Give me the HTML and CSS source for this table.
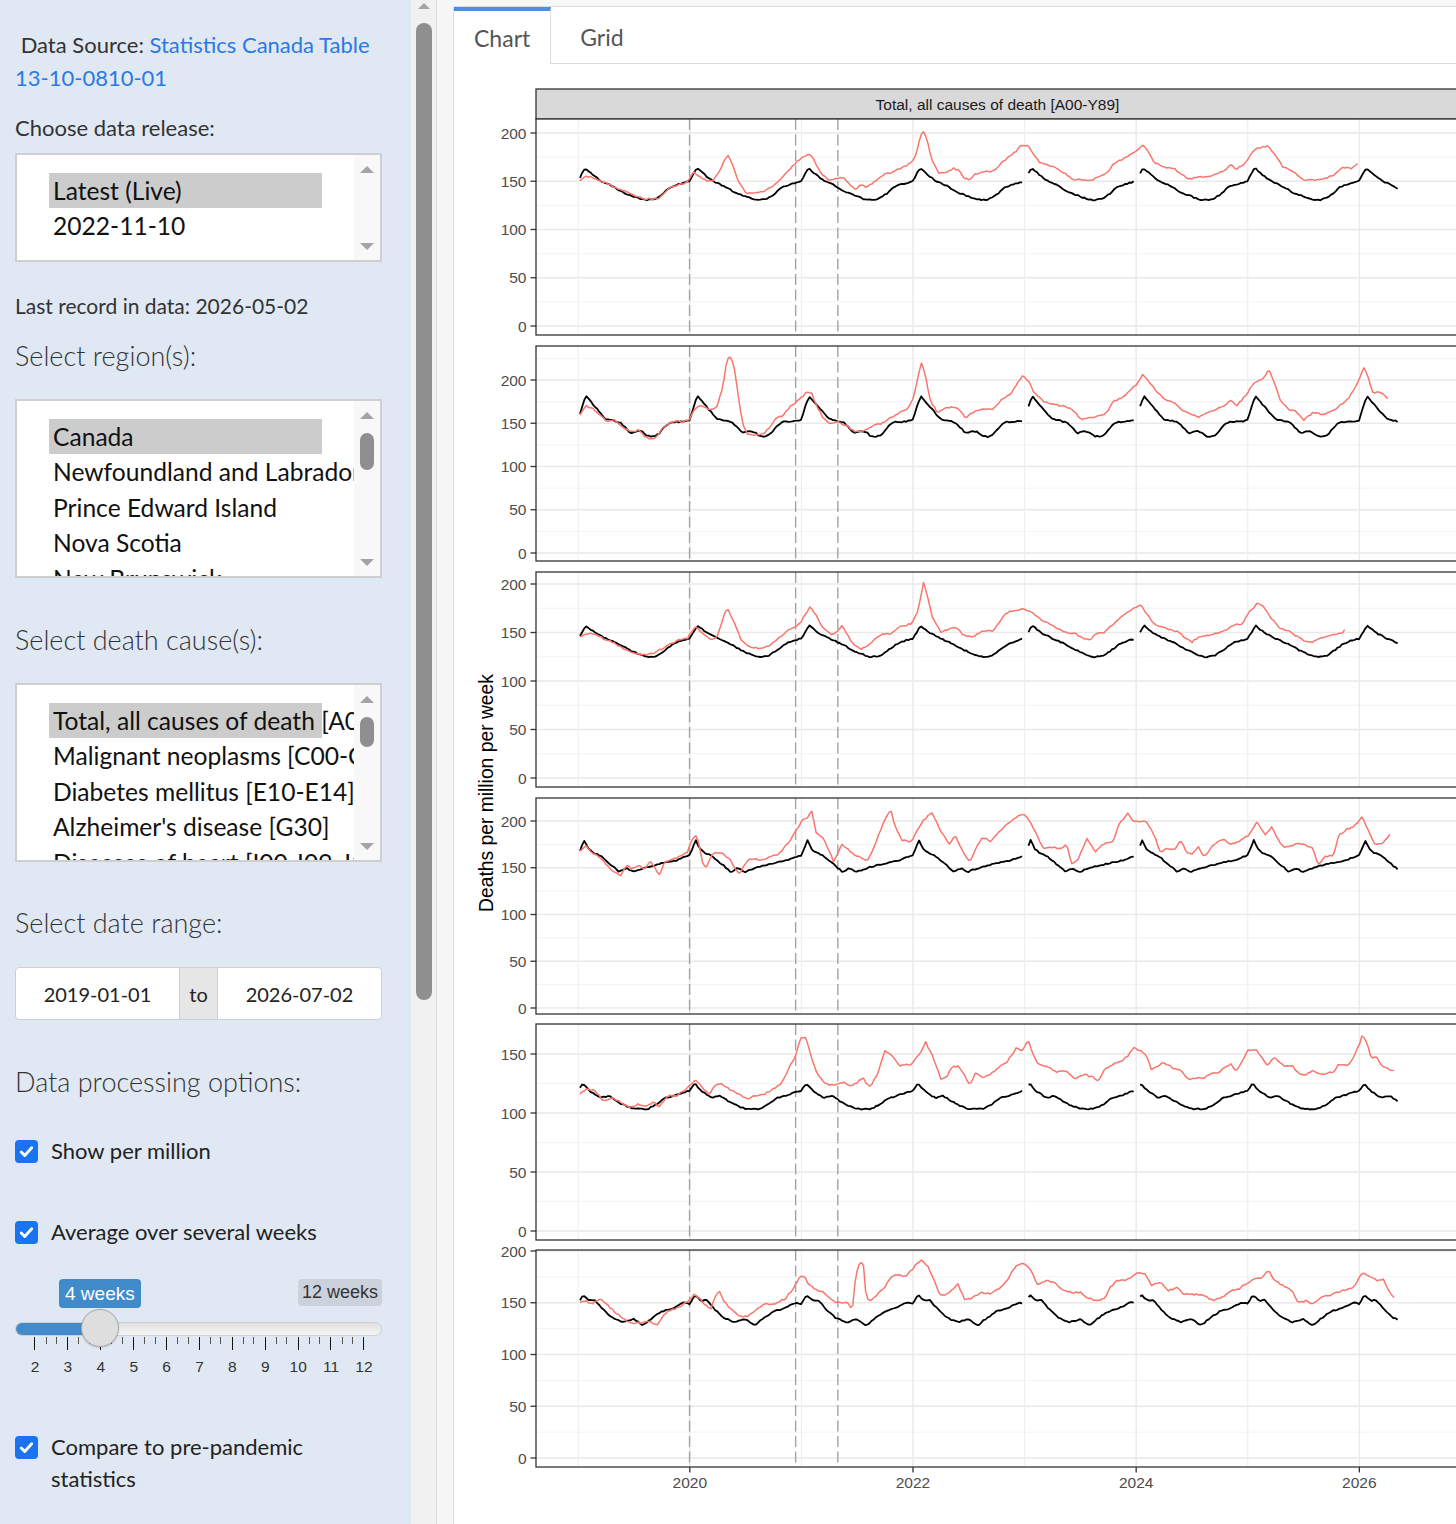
FILE: index.html
```html
<!DOCTYPE html>
<html lang="en">
<head>
<meta charset="utf-8">
<title>Canadian weekly deaths</title>
<link rel="stylesheet" href="styles.css">
</head>
<body>
<div class="app">
  <aside class="sidebar">
    <p class="source">&nbsp;Data Source: <a class="src-link" href="#">Statistics Canada Table 13-10-0810-01</a></p>

    <div class="lbl lbl-release">Choose data release:</div>
    <div class="listbox lb-release">
      <div class="lb-opts">
        <div class="lb-opt selected">Latest (Live)</div>
        <div class="lb-opt">2022-11-10</div>
      </div>
      <div class="lb-bar"><span class="arr-up"></span><span class="lb-fill"></span><span class="arr-down"></span></div>
    </div>

    <div class="lbl last-record">Last record in data: 2026-05-02</div>

    <h3 class="section sec-region">Select region(s):</h3>
    <div class="listbox lb-tall">
      <div class="lb-opts">
        <div class="lb-opt selected">Canada</div>
        <div class="lb-opt">Newfoundland and Labrador</div>
        <div class="lb-opt">Prince Edward Island</div>
        <div class="lb-opt">Nova Scotia</div>
        <div class="lb-opt">New Brunswick</div>
        <div class="lb-opt">Quebec</div>
      </div>
      <div class="lb-bar"><span class="arr-up"></span><span class="lb-thumb thumb-region"></span><span class="lb-fill"></span><span class="arr-down"></span></div>
    </div>

    <h3 class="section sec-cause">Select death cause(s):</h3>
    <div class="listbox lb-tall">
      <div class="lb-opts">
        <div class="lb-opt selected">Total, all causes of death [A00-Y89]</div>
        <div class="lb-opt">Malignant neoplasms [C00-C97]</div>
        <div class="lb-opt">Diabetes mellitus [E10-E14]</div>
        <div class="lb-opt">Alzheimer's disease [G30]</div>
        <div class="lb-opt">Diseases of heart [I00-I09, I11, I13, I20-I51]</div>
        <div class="lb-opt">Cerebrovascular diseases [I60-I69]</div>
      </div>
      <div class="lb-bar"><span class="arr-up"></span><span class="lb-thumb thumb-cause"></span><span class="lb-fill"></span><span class="arr-down"></span></div>
    </div>

    <h3 class="section sec-date">Select date range:</h3>
    <div class="daterange">
      <div class="dr-input">2019-01-01</div>
      <div class="dr-to">to</div>
      <div class="dr-input">2026-07-02</div>
    </div>

    <h3 class="section sec-proc">Data processing options:</h3>

    <div class="check check-1">
      <span class="cb"><svg viewBox="0 0 16 16"><path d="M3.6 8.4l2.9 2.9 5.9-6.4"/></svg></span>
      <span class="check-text">Show per million</span>
    </div>

    <div class="check check-2">
      <span class="cb"><svg viewBox="0 0 16 16"><path d="M3.6 8.4l2.9 2.9 5.9-6.4"/></svg></span>
      <span class="check-text">Average over several weeks</span>
    </div>

    <div class="slider">
      <div class="sl-labels"><span class="sl-from">4 weeks</span><span class="sl-max">12 weeks</span></div>
      <div class="sl-track"><div class="sl-bar"></div><div class="sl-handle"></div></div>
      <div class="sl-grid">
        <span class="sl-cell"></span><span class="sl-cell"></span><span class="sl-cell"></span><span class="sl-cell"></span><span class="sl-cell"></span>
        <span class="sl-cell"></span><span class="sl-cell"></span><span class="sl-cell"></span><span class="sl-cell"></span><span class="sl-cell last"></span>
      </div>
      <div class="sl-nums">
        <span>2</span><span>3</span><span>4</span><span>5</span><span>6</span><span>7</span><span>8</span><span>9</span><span>10</span><span>11</span><span>12</span>
      </div>
    </div>

    <div class="check check-3">
      <span class="cb"><svg viewBox="0 0 16 16"><path d="M3.6 8.4l2.9 2.9 5.9-6.4"/></svg></span>
      <span class="check-text wrap">Compare to pre-pandemic statistics</span>
    </div>
  </aside>

  <div class="side-scroll">
    <span class="sc-up"></span>
    <span class="sc-thumb"></span>
  </div>

  <main class="main">
    <div class="card">
      <nav class="tabs">
        <span class="tab active">Chart</span>
        <span class="tab">Grid</span>
      </nav>
      <svg class="plot" id="plot" viewBox="455 64 1100 1460" width="1100" height="1460"></svg>
    </div>
  </main>
</div>
<script src="app.js"></script>
</body>
</html>
```

FILE: styles.css
```css
html, body {
  margin: 0;
  padding: 0;
  height: 100%;
  overflow: hidden;
}
body {
  font-family: Lato, "Noto Sans", sans-serif;
  color: #333;
  background: #fff;
}
.app {
  display: flex;
  height: 1524px;
}

/* ---------- sidebar ---------- */
.sidebar {
  width: 411px;
  flex: none;
  box-sizing: border-box;
  padding: 0 29px 0 15px;
  background: #e0e8f3;
  overflow: hidden;
}
.source {
  margin: 28px 0 0;
  font-size: 22px;
  line-height: 33px;
}
.src-link {
  color: #2a7ae2;
  text-decoration: none;
}
.lbl {
  font-size: 22px;
  line-height: 28px;
}
.lbl-release { margin-top: 20px; }
.last-record {
  margin-top: 30px;
  font-size: 21px;
}
.section {
  margin: 0;
  font-size: 27px;
  font-weight: 300;
  line-height: 36px;
  color: #333;
}
.sec-region { margin-top: 18px; }
.sec-cause { margin-top: 44px; }
.sec-date { margin-top: 43px; }
.sec-proc { margin-top: 44px; }

.listbox {
  display: flex;
  box-sizing: border-box;
  border: 2px solid #cfcfcf;
  background: #fff;
}
.lb-release {
  margin-top: 11px;
  height: 109px;
}
.lb-tall {
  margin-top: 25px;
  height: 179px;
}
.lb-opts {
  flex: 1;
  min-width: 0;
  overflow: hidden;
  padding: 18px 0 0 32px;
}
.lb-opt {
  width: 273px;
  box-sizing: border-box;
  height: 35.4px;
  line-height: 35.4px;
  padding-left: 4px;
  white-space: nowrap;
  font-size: 24.6px;
  color: #111;
}
.lb-opt.selected {
  background: #cccccc;
}
.lb-bar {
  width: 26px;
  flex: none;
  box-sizing: border-box;
  padding: 11px 0 10px;
  background: #f8f8f8;
  display: flex;
  flex-direction: column;
  align-items: center;
}
.arr-up, .arr-down {
  width: 0;
  height: 0;
  border-left: 7px solid transparent;
  border-right: 7px solid transparent;
}
.arr-up { border-bottom: 7px solid #a3a3a3; }
.arr-down { border-top: 7px solid #a3a3a3; }
.lb-fill { flex: 1; }
.lb-thumb {
  width: 14px;
  margin-top: 14px;
  border-radius: 7px;
  background: #8f8f8f;
}
.thumb-region { height: 37px; }
.thumb-cause { height: 30px; }

.daterange {
  margin-top: 26px;
  display: flex;
  height: 53px;
  box-sizing: border-box;
  border: 1.5px solid #cfcfcf;
  border-radius: 4px;
  background: #fff;
  font-size: 20px;
  color: #222;
}
.dr-input {
  flex: 1;
  display: flex;
  align-items: center;
  justify-content: center;
}
.dr-to {
  width: 39px;
  flex: none;
  box-sizing: border-box;
  background: #e6e6e6;
  border-left: 1.5px solid #cfcfcf;
  border-right: 1.5px solid #cfcfcf;
  display: flex;
  align-items: center;
  justify-content: center;
}

.check {
  display: flex;
  align-items: flex-start;
  gap: 13px;
  font-size: 22px;
  line-height: 28px;
  color: #222;
}
.check-1 { margin-top: 37px; }
.check-2 { margin-top: 53px; }
.check-3 {
  margin-top: 54px;
  line-height: 32px;
}
.cb {
  width: 23px;
  height: 23px;
  flex: none;
  margin-top: 2.5px;
  border-radius: 4px;
  background: #1a73f0;
  display: flex;
  align-items: center;
  justify-content: center;
}
.check-3 .cb { margin-top: 4.5px; }
.cb svg {
  width: 19px;
  height: 19px;
}
.cb path {
  fill: none;
  stroke: #fff;
  stroke-width: 2.4;
  stroke-linecap: round;
  stroke-linejoin: round;
}
.wrap { max-width: 300px; }

/* slider */
.slider {
  margin-top: 33px;
  font-family: "Liberation Sans", Arial, sans-serif;
}
.sl-labels {
  display: flex;
  justify-content: space-between;
  align-items: flex-start;
  height: 29px;
}
.sl-from {
  margin-left: 44px;
  height: 29px;
  line-height: 29px;
  padding: 0 6px;
  border-radius: 4px;
  background: #428bca;
  color: #fff;
  font-size: 19px;
}
.sl-max {
  height: 27px;
  line-height: 27px;
  padding: 0 4px;
  border-radius: 4px;
  background: #cbd2dc;
  color: #333;
  font-size: 18px;
}
.sl-track {
  position: relative;
  margin-top: 14px;
  height: 12px;
  border: 1px solid #cfcfcf;
  border-radius: 7px;
  background: linear-gradient(#e0e0e0, #f5f5f5);
}
.sl-bar {
  width: 85px;
  height: 100%;
  border-radius: 7px 0 0 7px;
  background: #428bca;
}
.sl-handle {
  position: absolute;
  left: 65px;
  top: -14px;
  width: 38px;
  height: 38px;
  box-sizing: border-box;
  border: 1.5px solid #a8a8a8;
  border-radius: 50%;
  background: #dedede;
  box-shadow: 0 1px 2px rgba(0,0,0,0.15);
}
.sl-grid {
  display: flex;
  width: 330px;
  height: 13px;
  margin: 1px 0 0 19.3px;
}
.sl-cell {
  flex: 1;
  border-left: 1.5px solid #111;
  background:
    linear-gradient(#555, #555) 33.3% 0 / 1px 7px no-repeat,
    linear-gradient(#555, #555) 66.7% 0 / 1px 7px no-repeat;
}
.sl-cell.last { border-right: 1.5px solid #111; }
.sl-nums {
  display: grid;
  grid-template-columns: repeat(11, 32.9px);
  margin: 7px 0 0 3.6px;
  font-size: 15.5px;
  line-height: 20px;
  text-align: center;
  color: #333;
}

/* ---------- sidebar scrollbar ---------- */
.side-scroll {
  width: 26px;
  flex: none;
  box-sizing: border-box;
  background: #f1f1f1;
  border-right: 1px solid #dedede;
  display: flex;
  flex-direction: column;
  align-items: center;
  padding-top: 3px;
}
.sc-up {
  width: 0;
  height: 0;
  border-left: 6px solid transparent;
  border-right: 6px solid transparent;
  border-bottom: 6px solid #a3a3a3;
}
.sc-thumb {
  width: 16px;
  height: 977px;
  margin-top: 14px;
  border-radius: 8px;
  background: #8f8f8f;
}

/* ---------- main ---------- */
.main {
  flex: 1;
  min-width: 0;
  box-sizing: border-box;
  padding: 6px 0 0 16px;
  background: #f7f7f7;
  overflow: hidden;
}
.card {
  height: 100%;
  background: #fff;
  border-left: 1px solid #dcdcdc;
  border-top: 1px solid #dcdcdc;
  overflow: hidden;
}
.tabs {
  display: flex;
  height: 56px;
  border-bottom: 1px solid #dcdcdc;
}
.tab {
  display: flex;
  align-items: center;
  box-sizing: border-box;
  padding: 0 20px;
  font-size: 23px;
  color: #555;
  border-left: 1px solid transparent;
  border-top: 4px solid transparent;
}
.tab.active {
  height: 57px;
  border-left: none;
  border-top-color: #4a8fe0;
  border-right: 1px solid #dcdcdc;
  margin-right: 8px;
  background: #fff;
  position: relative;
  z-index: 1;
}
.plot {
  display: block;
}
.plot text {
  font-family: "Liberation Sans", Arial, sans-serif;
}
.panel-bg { fill: #fff; }
.grid-major { stroke: #e9e9e9; stroke-width: 1.6; }
.grid-minor { stroke: #f2f2f2; stroke-width: 0.9; }
.vgrid-major { stroke: #ebebeb; stroke-width: 1.5; }
.vgrid-minor { stroke: #efefef; stroke-width: 1.2; }
.vline-dash { stroke: #a3a3a3; stroke-width: 1.4; stroke-dasharray: 11 4.5; }
.line-black { fill: none; stroke: #000; stroke-width: 1.8; stroke-linejoin: round; }
.line-red { fill: none; stroke: #f8766d; stroke-width: 1.5; stroke-linejoin: round; }
.panel-border { fill: none; stroke: #333; stroke-width: 1.3; }
.strip { fill: #d9d9d9; stroke: #333; stroke-width: 1.3; }
.strip-text { font-size: 15.5px; fill: #1a1a1a; text-anchor: middle; dominant-baseline: central; }
.tick-label { font-size: 15.5px; fill: #4d4d4d; dominant-baseline: central; }
.tick-y { text-anchor: end; }
.tick-x { text-anchor: middle; }
.axis-tick { stroke: #333; stroke-width: 1.3; }
.axis-title { font-size: 19.3px; fill: #000; text-anchor: middle; dominant-baseline: central; }
```

FILE: app.js
```js
(function () {
  var NS = 'http://www.w3.org/2000/svg';
  var svg = document.getElementById('plot');
  function add(tag, attrs, parent, text) {
    var e = document.createElementNS(NS, tag);
    for (var k in attrs) e.setAttribute(k, attrs[k]);
    if (text !== undefined) e.textContent = text;
    (parent || svg).appendChild(e);
    return e;
  }
  var LEFT = 537, RIGHT = 1460;
  function xz(zx) { return LEFT + zx / 1.7062; }
  function xt(t) { return xz(72 + 190.4 * t); }

  var MINOR_X = [0, 2, 4, 6].map(xt);
  var MAJOR_X = [1, 3, 5, 7].map(xt);
  var DASH_X = [xz(262), xz(443), xz(515)];

  var seed = 98765431;
  function rnd() { seed = (seed * 16807) % 2147483647; return seed / 2147483647; }

  function redPoints(kp, crop) {
    var pxs = kp.map(function (a) { return xz(a[0]); });
    var pys = kp.map(function (a) { return crop + a[1] / 3; });
    var pts = [], i = 0, step = 2.148, x = pxs[0], last = pxs[pxs.length - 1];
    while (x <= last + 0.01) {
      while (i < pxs.length - 2 && x > pxs[i + 1]) i++;
      var f = (x - pxs[i]) / (pxs[i + 1] - pxs[i]);
      var y = pys[i] + f * (pys[i + 1] - pys[i]) + (rnd() - 0.5) * 1.6;
      pts.push(x.toFixed(1) + ',' + y.toFixed(1));
      x += step;
    }
    return pts.join(' ');
  }

  function blackLines(pat, crop) {
    var segs = [], cur = [];
    for (var t = 0.016; t <= 7.345; t += 1 / 52) {
      var gap = (t > 3.982 && t < 4.023) || (t > 4.982 && t < 5.023);
      if (gap) { if (cur.length) { segs.push(cur); cur = []; } continue; }
      var u = t - Math.floor(t);
      var j = 0;
      while (j < pat.length - 2 && u > pat[j + 1][0]) j++;
      var f = (u - pat[j][0]) / (pat[j + 1][0] - pat[j][0]);
      var zy = pat[j][1] + f * (pat[j + 1][1] - pat[j][1]);
      var y = crop + zy / 3 + (rnd() - 0.5) * 1.2;
      cur.push(xt(t).toFixed(1) + ',' + y.toFixed(1));
    }
    if (cur.length) segs.push(cur);
    return segs.map(function (s) { return s.join(' '); });
  }

  var panels = [
    { top: 119, bot: 335, z: 326, k: 0.965, crop: 119,
      black: [[0,186],[0.03,165],[0.065,147],[0.1,158],[0.15,172],[0.2,185],[0.3,200],[0.4,220],[0.5,233],[0.58,242],[0.64,243],[0.7,238],[0.76,225],[0.82,205],[0.88,198],[0.94,192],[1,186]],
      red: [[75,185],[85,172],[95,175],[110,185],[130,200],[150,215],[170,232],[185,240],[200,240],[210,238],[225,210],[240,198],[255,192],[262,180],[270,158],[280,175],[290,185],[302,185],[312,160],[320,130],[327,108],[335,135],[345,185],[358,222],[375,222],[390,215],[405,200],[415,185],[430,155],[445,128],[458,112],[465,105],[472,115],[480,145],[490,170],[500,183],[510,180],[525,175],[535,195],[545,210],[555,198],[565,205],[580,185],[595,165],[610,158],[625,145],[640,132],[648,110],[655,60],[660,32],[667,60],[675,120],[688,165],[700,158],[712,148],[722,155],[730,175],[740,185],[750,165],[765,158],[780,158],[790,140],[805,115],[820,95],[828,78],[840,82],[850,110],[860,130],[875,140],[890,150],[905,165],[915,180],[930,183],[945,185],[960,175],[975,160],[985,135],[995,125],[1010,110],[1025,95],[1035,77],[1045,100],[1055,130],[1065,140],[1080,148],[1090,150],[1100,165],[1115,180],[1130,175],[1150,170],[1160,165],[1175,155],[1185,138],[1195,150],[1205,140],[1215,120],[1228,87],[1250,82],[1262,110],[1275,145],[1290,155],[1300,170],[1310,185],[1325,183],[1345,178],[1360,170],[1375,145],[1390,148],[1400,138],[1405,130]] },
    { top: 346, bot: 561, z: 553, k: 0.865, crop: 346,
      black: [[0,222],[0.035,182],[0.068,150],[0.12,170],[0.17,190],[0.25,220],[0.33,225],[0.38,230],[0.44,250],[0.47,262],[0.54,255],[0.58,258],[0.62,270],[0.67,272],[0.72,265],[0.78,240],[0.83,228],[0.88,228],[0.96,225],[1,222]],
      red: [[75,208],[85,180],[95,185],[105,200],[120,225],[135,222],[150,245],[165,258],[175,252],[185,270],[195,280],[205,272],[220,240],[235,225],[250,228],[262,220],[270,190],[278,178],[290,185],[300,192],[308,185],[318,130],[325,50],[330,28],[338,60],[345,150],[352,230],[360,262],[370,268],[390,262],[400,240],[410,215],[420,210],[435,180],[450,160],[462,138],[470,140],[480,185],[490,215],[500,230],[515,228],[530,240],[545,258],[560,255],[575,240],[590,232],[605,215],[620,200],[635,188],[645,150],[652,90],[658,50],[665,95],[672,160],[685,200],[700,185],[712,182],[722,190],[732,215],[745,200],[760,190],[780,188],[795,160],[810,145],[825,100],[830,90],[840,105],[850,140],[865,165],[880,175],[900,180],[915,190],[930,220],[945,215],[960,208],[975,200],[985,165],[995,160],[1010,140],[1025,115],[1035,85],[1045,105],[1060,140],[1075,160],[1090,170],[1100,190],[1115,200],[1130,215],[1145,198],[1160,192],[1175,178],[1185,160],[1195,180],[1210,150],[1225,110],[1240,100],[1250,70],[1260,110],[1270,165],[1285,190],[1300,200],[1310,222],[1325,200],[1340,205],[1355,200],[1370,180],[1385,160],[1400,120],[1412,65],[1420,95],[1428,140],[1440,138],[1448,145],[1455,162]] },
    { top: 572, bot: 787, z: 778, k: 0.97, crop: 572,
      black: [[0,200],[0.035,180],[0.068,160],[0.147,182],[0.252,200],[0.357,215],[0.462,235],[0.567,250],[0.62,255],[0.7,252],[0.777,235],[0.857,215],[0.935,205],[1,200]],
      red: [[75,195],[85,185],[100,185],[115,200],[130,210],[150,230],[170,245],[190,250],[205,240],[225,220],[245,203],[258,200],[265,180],[272,165],[282,180],[295,200],[308,200],[315,165],[322,120],[328,112],[338,150],[350,205],[365,225],[380,230],[400,220],[415,195],[435,170],[450,155],[462,120],[468,105],[478,130],[490,170],[505,188],[515,175],[522,160],[530,185],[540,215],[555,230],[570,215],[590,185],[605,185],[620,165],[640,155],[650,125],[657,70],[661,30],[667,65],[675,130],[690,180],[705,170],[715,165],[730,190],[745,195],[760,180],[780,175],[790,150],[800,125],[815,115],[830,110],[845,120],[860,140],[880,160],[900,180],[920,185],[935,200],[945,205],[955,185],[970,180],[990,150],[1005,125],[1020,110],[1032,100],[1042,125],[1055,155],[1075,170],[1095,180],[1110,200],[1120,210],[1130,195],[1145,190],[1160,185],[1175,175],[1190,160],[1205,155],[1215,125],[1230,95],[1240,100],[1255,140],[1270,170],[1285,178],[1295,190],[1310,205],[1325,210],[1340,195],[1360,190],[1375,185],[1382,165]] },
    { top: 798, bot: 1014, z: 1008, k: 0.935, crop: 572,
      black: [[0,850],[0.03,825],[0.055,805],[0.09,830],[0.13,842],[0.2,852],[0.3,880],[0.37,900],[0.43,888],[0.49,900],[0.55,892],[0.62,885],[0.7,878],[0.8,870],[0.88,865],[0.95,855],[1,850]],
      red: [[75,835],[85,820],[95,845],[105,850],[115,865],[125,890],[135,900],[145,910],[155,880],[165,890],[175,880],[185,890],[195,870],[200,880],[210,910],[220,870],[232,860],[245,855],[258,840],[265,805],[272,790],[278,810],[285,880],[292,885],[300,845],[312,840],[322,850],[330,860],[340,890],[348,905],[355,880],[365,860],[375,860],[385,865],[400,855],[415,845],[425,825],[435,800],[445,770],[455,745],[465,735],[470,710],[478,780],[490,800],[500,835],[508,870],[515,845],[522,815],[530,830],[545,850],[565,865],[575,835],[590,765],[600,725],[606,718],[612,760],[625,805],[640,810],[650,775],[660,748],[675,720],[690,775],[705,815],[715,790],[725,830],[740,870],[750,830],[762,795],[775,810],[790,780],[805,755],[820,735],[830,725],[840,740],[852,780],[865,830],[880,825],[895,830],[905,815],[915,880],[925,860],[940,800],[955,840],[968,815],[985,810],[995,755],[1010,725],[1020,750],[1040,745],[1055,790],[1065,840],[1075,830],[1090,830],[1100,805],[1110,840],[1120,845],[1130,825],[1140,855],[1155,820],[1170,800],[1185,815],[1200,810],[1215,790],[1230,750],[1245,790],[1255,765],[1265,800],[1275,825],[1290,820],[1300,815],[1315,820],[1325,830],[1335,880],[1345,855],[1360,850],[1370,790],[1385,770],[1395,765],[1410,735],[1420,775],[1430,815],[1445,815],[1455,790],[1460,785]] },
    { top: 1024, bot: 1240, z: 1231, k: 1.18, crop: 1024,
      black: [[0,200],[0.045,178],[0.085,195],[0.12,205],[0.2,222],[0.27,215],[0.33,228],[0.4,242],[0.5,255],[0.62,255],[0.7,242],[0.78,222],[0.86,215],[0.94,205],[1,200]],
      red: [[75,210],[85,195],[100,200],[115,230],[130,220],[145,235],[160,250],[175,240],[185,248],[200,235],[210,248],[225,215],[240,215],[255,195],[268,175],[275,170],[285,195],[295,210],[305,185],[315,180],[330,195],[345,210],[360,225],[375,215],[390,210],[405,195],[420,175],[432,130],[442,100],[452,40],[460,40],[470,100],[480,150],[495,180],[510,185],[525,175],[535,185],[545,180],[558,160],[568,190],[575,175],[585,140],[595,80],[605,90],[620,125],[640,120],[655,90],[665,55],[675,90],[685,135],[690,165],[700,160],[710,130],[720,125],[730,150],[740,185],[750,145],[762,160],[775,150],[790,130],[805,110],[820,70],[830,80],[840,50],[850,100],[860,125],[875,130],[890,145],[905,140],[920,165],[935,150],[950,160],[960,170],[970,135],[985,120],[1000,110],[1010,95],[1020,70],[1030,80],[1040,90],[1050,135],[1060,130],[1070,115],[1085,130],[1100,140],[1115,170],[1125,160],[1135,165],[1150,150],[1165,145],[1175,130],[1185,120],[1195,140],[1205,110],[1215,78],[1230,80],[1240,105],[1248,125],[1260,100],[1275,125],[1290,125],[1300,145],[1310,155],[1325,140],[1340,150],[1360,145],[1370,120],[1385,125],[1395,100],[1405,60],[1410,30],[1418,60],[1425,100],[1435,100],[1445,130],[1455,135],[1465,140]] },
    { top: 1250, bot: 1467, z: 1458, k: 1.035, crop: 1024,
      black: [[0,840],[0.045,812],[0.1,830],[0.15,828],[0.22,855],[0.3,880],[0.4,895],[0.5,885],[0.58,905],[0.65,885],[0.75,862],[0.85,852],[0.95,835],[1,840]],
      red: [[75,835],[85,830],[95,840],[110,825],[120,840],[135,865],[150,885],[165,900],[180,895],[195,890],[205,905],[215,880],[225,860],[245,850],[260,830],[270,812],[280,825],[290,845],[298,855],[305,820],[312,800],[320,830],[335,860],[345,875],[360,878],[375,860],[390,840],[405,840],[425,825],[440,790],[450,760],[458,755],[465,780],[475,795],[490,805],[505,830],[515,835],[530,835],[540,855],[545,760],[550,725],[555,715],[560,730],[563,820],[570,830],[580,815],[595,790],[605,760],[620,750],[630,760],[640,740],[650,720],[658,710],[668,725],[678,765],[690,815],[700,810],[712,795],[720,780],[732,830],[745,820],[760,805],[775,810],[790,795],[805,765],[815,735],[825,720],[835,720],[845,740],[855,780],[870,770],[885,775],[900,800],[915,805],[930,805],[940,820],[955,830],[970,825],[980,790],[990,770],[1005,770],[1015,760],[1025,745],[1040,750],[1050,785],[1065,775],[1080,800],[1095,790],[1105,810],[1120,810],[1140,815],[1155,830],[1170,820],[1185,800],[1200,795],[1215,775],[1225,765],[1240,760],[1250,740],[1260,770],[1275,785],[1290,800],[1300,835],[1315,830],[1325,840],[1340,820],[1360,810],[1375,800],[1395,790],[1410,745],[1420,755],[1435,770],[1445,765],[1455,800],[1465,825]] }
  ];

  add('rect', { x: LEFT, y: 89, width: RIGHT - LEFT, height: 30, 'class': 'strip' });
  add('text', { x: (LEFT + RIGHT) / 2, y: 104, 'class': 'strip-text' }, null, 'Total, all causes of death [A00-Y89]');

  panels.forEach(function (p) {
    var g = add('g', {});
    add('rect', { x: LEFT, y: p.top, width: RIGHT - LEFT, height: p.bot - p.top, 'class': 'panel-bg' }, g);
    var lo = (p.z - p.bot) / p.k, hi = (p.z - p.top) / p.k;
    var v, y;
    for (v = -25; v <= 250; v += 25) {
      if (v < lo || v > hi) continue;
      y = p.z - v * p.k;
      add('line', { x1: LEFT, x2: RIGHT, y1: y, y2: y, 'class': (v % 50 === 0) ? 'grid-major' : 'grid-minor' }, g);
    }
    MINOR_X.forEach(function (x) {
      add('line', { x1: x, x2: x, y1: p.top, y2: p.bot, 'class': 'vgrid-minor' }, g);
    });
    MAJOR_X.forEach(function (x) {
      add('line', { x1: x, x2: x, y1: p.top, y2: p.bot, 'class': 'vgrid-major' }, g);
    });
    DASH_X.forEach(function (x) {
      add('line', { x1: x, x2: x, y1: p.top, y2: p.bot, 'class': 'vline-dash' }, g);
    });
    blackLines(p.black, p.crop).forEach(function (pts) {
      add('polyline', { points: pts, 'class': 'line-black' }, g);
    });
    add('polyline', { points: redPoints(p.red, p.crop), 'class': 'line-red' }, g);
    add('rect', { x: LEFT, y: p.top, width: RIGHT - LEFT, height: p.bot - p.top, 'class': 'panel-border' }, g);
    for (v = 0; v <= 200; v += 50) {
      if (v > hi + 1) continue;
      y = p.z - v * p.k;
      add('line', { x1: LEFT - 5.5, x2: LEFT, y1: y, y2: y, 'class': 'axis-tick' }, g);
      add('text', { x: LEFT - 9.5, y: y, 'class': 'tick-label tick-y' }, g, String(v));
    }
  });

  var bottom = panels[panels.length - 1].bot;
  ['2020', '2022', '2024', '2026'].forEach(function (lab, i) {
    var x = MAJOR_X[i];
    add('line', { x1: x, x2: x, y1: bottom, y2: bottom + 5.5, 'class': 'axis-tick' });
    add('text', { x: x, y: bottom + 15, 'class': 'tick-label tick-x' }, null, lab);
  });

  add('text', { x: 487, y: 793, transform: 'rotate(-90 487 793)', 'class': 'axis-title' }, null, 'Deaths per million per week');
})();
```
